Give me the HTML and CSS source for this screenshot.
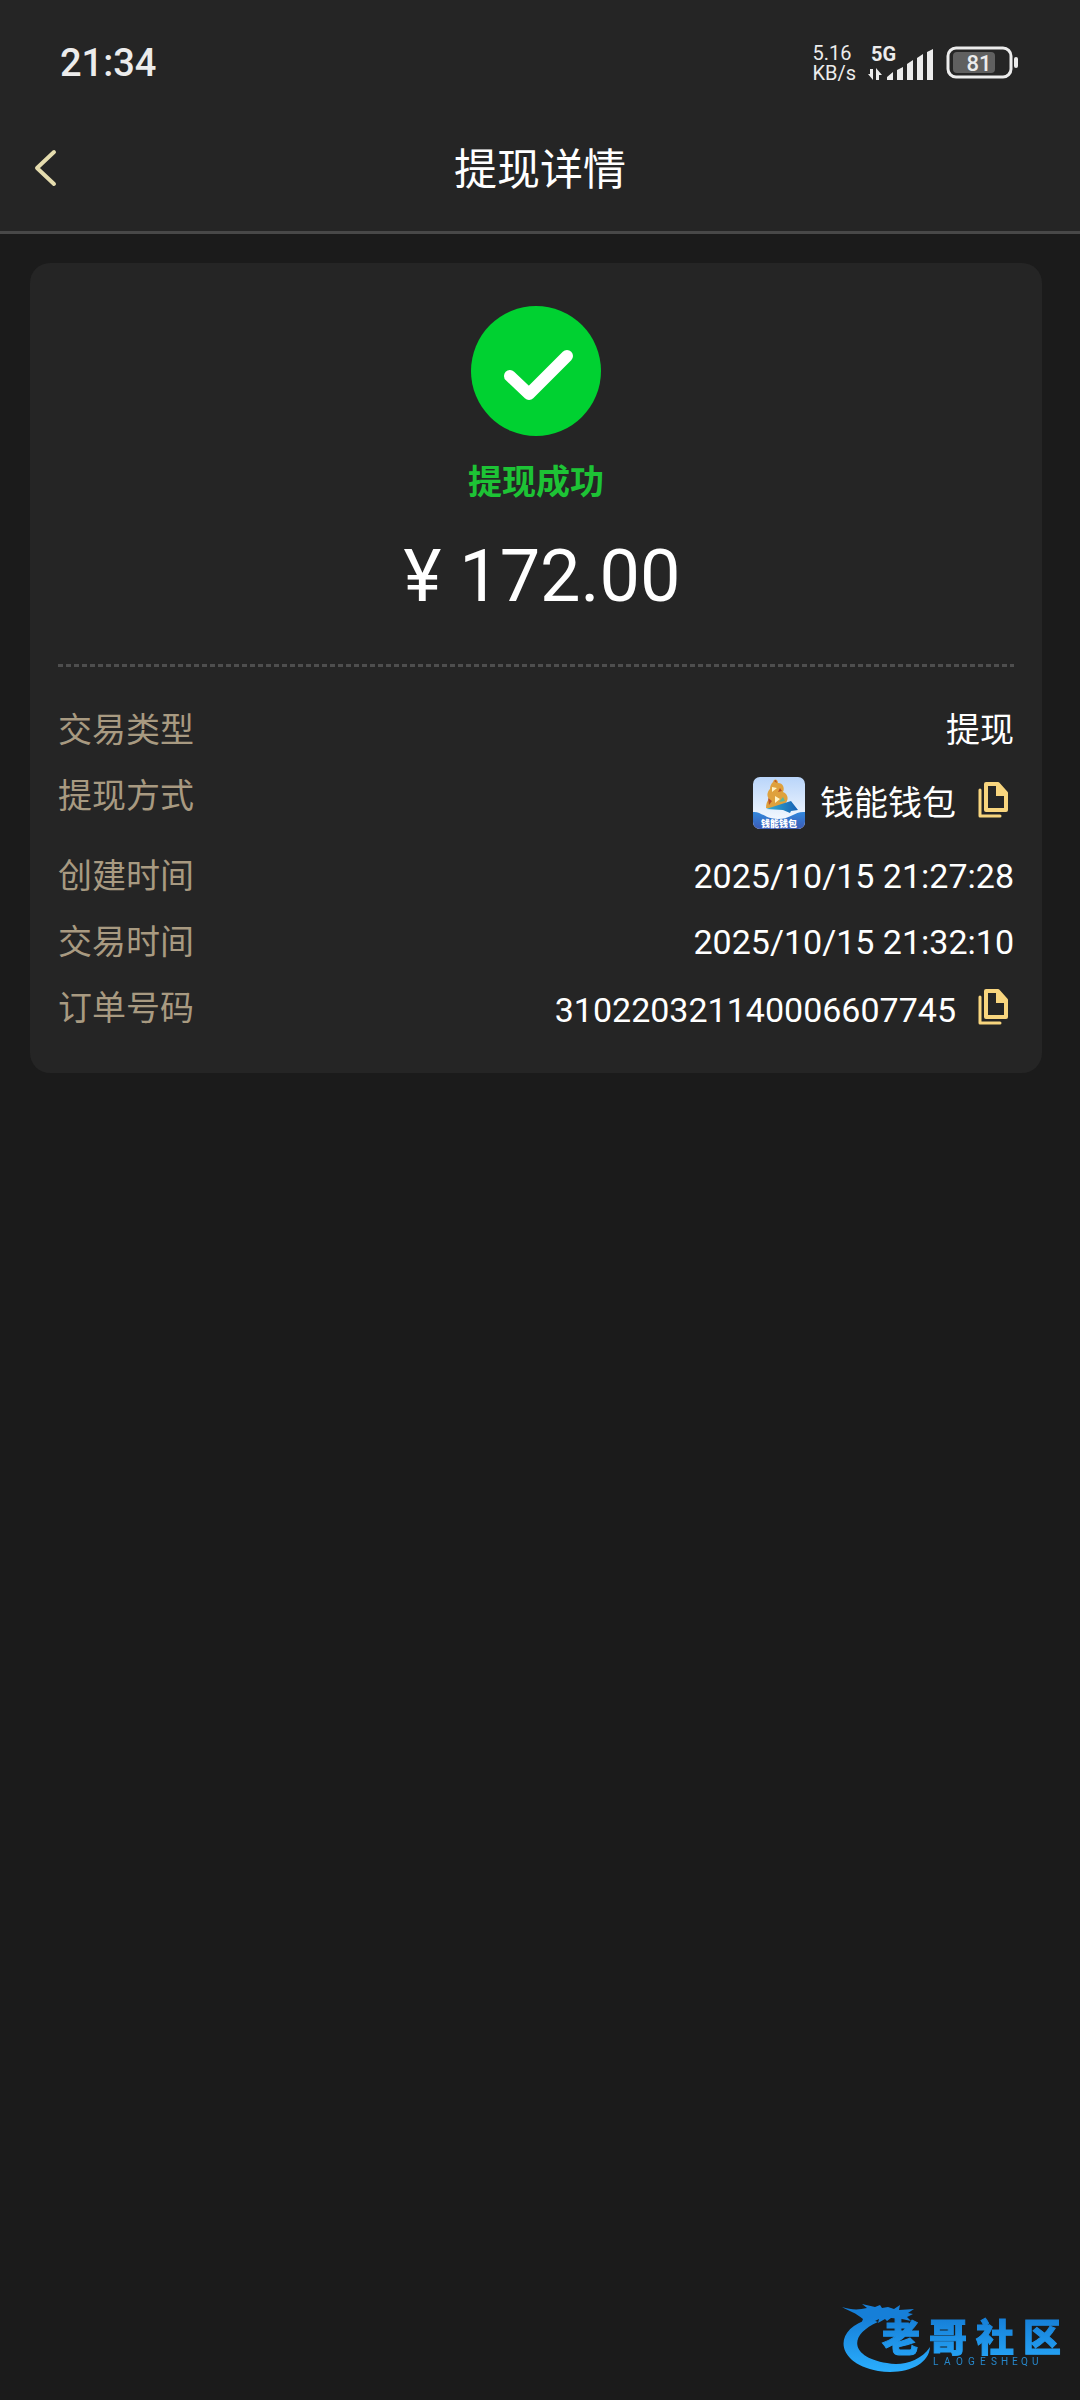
FILE: index.html
```html
<!DOCTYPE html>
<html lang="zh-CN">
<head>
<meta charset="utf-8">
<meta name="viewport" content="width=device-width, initial-scale=1">
<title>提现详情</title>
<link rel="stylesheet" href="styles.css">
</head>
<body>
<svg class="defs" width="0" height="0" aria-hidden="true">
  <symbol id="copy" viewBox="0 0 30 36">
    <path d="M8 2h12l8 9v17H8z" fill="none" stroke="currentColor" stroke-width="4" stroke-linejoin="round"/>
    <path d="M18 2h3l8 9v3H18z" fill="currentColor"/>
    <path d="M2 8v26h20" fill="none" stroke="currentColor" stroke-width="3" stroke-linecap="round" stroke-linejoin="round"/>
  </symbol>
</svg>

<header class="header">
  <div class="status">
    <time class="clock">21:34</time>
    <div class="indicators">
      <div class="speed"><span>5.16</span><span>KB/s</span></div>
      <svg class="signal" viewBox="0 0 66 40" role="img" aria-label="5G">
        <text class="network" x="3" y="18">5G</text>
        <g fill="#ececec">
          <path d="M5 26v11l-5-6h2v-5zM8 37V25l6 7h-3v5z"/>
          <path d="M19 37v-3l6-5v8zM29 27l6-3v13h-6zM39 21l6-4v20h-6zM49 15l6-4v26h-6zM59 9l6-3v31h-6z"/>
        </g>
      </svg>
      <svg class="battery" viewBox="0 0 74 34" role="img" aria-label="81%">
        <rect x="2" y="2" width="63" height="29" rx="8" fill="none" stroke="#ececec" stroke-width="3"/>
        <rect x="7" y="6" width="42" height="21" rx="4" fill="#606060"/>
        <rect x="68" y="11" width="4" height="11" rx="2" fill="#ececec"/>
        <text class="level" x="33" y="25" text-anchor="middle">81</text>
      </svg>
    </div>
  </div>
  <nav class="navbar">
    <button class="back" type="button" aria-label="返回">
      <svg viewBox="0 0 24 38" width="24" height="38"><path d="M20 3 3 19l17 16" fill="none" stroke="#e5dcae" stroke-width="4" stroke-linecap="round" stroke-linejoin="round"/></svg>
    </button>
    <h1 class="title">提现详情</h1>
  </nav>
</header>

<main class="content">
  <section class="card">
    <div class="summary">
      <svg class="check" viewBox="0 0 130 130" aria-hidden="true">
        <circle cx="65" cy="65" r="65" fill="#00d131"/>
        <path d="M39 70 58 88 96 50" fill="none" stroke="#fff" stroke-width="12" stroke-linecap="round" stroke-linejoin="round"/>
      </svg>
      <p class="result">提现成功</p>
      <p class="amount">¥ 172.00</p>
    </div>
    <div class="divider"></div>
    <dl class="details">
      <div class="row"><dt>交易类型</dt><dd>提现</dd></div>
      <div class="row row-wallet">
        <dt>提现方式</dt>
        <dd>
          <svg class="wallet" viewBox="0 0 52 52" aria-hidden="true">
            <defs>
              <linearGradient id="sky" x2="0" y2="1"><stop stop-color="#b9d5fa"/><stop offset="1" stop-color="#fff"/></linearGradient>
              <linearGradient id="sea" x2="0" y2="1"><stop stop-color="#3187dc"/><stop offset="1" stop-color="#3c5bb6"/></linearGradient>
              <linearGradient id="boat"><stop stop-color="#36b0d2"/><stop offset="1" stop-color="#155fb4"/></linearGradient>
              <clipPath id="tile"><rect width="52" height="52" rx="7"/></clipPath>
            </defs>
            <g clip-path="url(#tile)">
              <rect width="52" height="52" fill="url(#sky)"/>
              <path d="M0 35c8-1 12 7 25 7s17-8 27-7v17H0z" fill="url(#sea)"/>
              <path d="M20 5c1-4 5-3 5 1 5 0 7 5 5 9 6 2 6 10 1 12-5 3-12 5-18 4 0-4 1-7 3-9-3-4-1-8 1-10 0-3 1-5 3-7z" fill="#dfa13d"/>
              <path d="m19 10 5 1-5 4zM22 19l5 3-5 4z" fill="#fff3c4"/>
              <path d="m15 21 4 3-3 4zM27 11l2 3-4 1zM21 4l2-1 1 3z" fill="#b84f28"/>
              <path d="m26 25 4-5 2 4z" fill="#5fb59a"/>
              <path d="M13 32 38 24l7 9-7 1-1 2-7-3z" fill="url(#boat)"/>
              <text class="wallet-name" x="26" y="50" text-anchor="middle">钱能钱包</text>
            </g>
          </svg>
          <span>钱能钱包</span>
          <button class="copy" type="button" aria-label="复制提现方式"><svg><use href="#copy"/></svg></button>
        </dd>
      </div>
      <div class="row"><dt>创建时间</dt><dd>2025/10/15 21:27:28</dd></div>
      <div class="row"><dt>交易时间</dt><dd>2025/10/15 21:32:10</dd></div>
      <div class="row row-order">
        <dt>订单号码</dt>
        <dd><span>310220321140006607745</span><button class="copy" type="button" aria-label="复制订单号码"><svg><use href="#copy"/></svg></button></dd>
      </div>
    </dl>
  </section>
</main>

<svg class="watermark" viewBox="0 0 224 72" role="img" aria-label="老哥社区">
  <defs>
    <linearGradient id="blue" gradientUnits="userSpaceOnUse" x1="0" y1="0" x2="0" y2="70"><stop offset=".2" stop-color="#167fd8"/><stop offset="1" stop-color="#2bb0ff"/></linearGradient>
  </defs>
  <path d="M28 15C-9 24-8 59 36 67c28 4 51-6 52-24-10 15-29 19-43 16C8 53 6 31 36 18z" fill="url(#blue)"/>
  <path d="M0 3c9 3 17 3 25 1l-5-4 13 3 5-2 2 3 6-1 6 2 6-4-1 5 15-1-6 4 5 1-6 3 4 4-9-2-11-1-4 3-2-2-7 4 1-4-8 4-6-1-4 2 2-5C14 9 7 7 0 3z" fill="url(#blue)"/>
  <text class="brand" x="40 87 134 181" y="47">老哥社区</text>
  <text class="brand-latin" x="91 102 114 126 138 149 159 170 179 190" y="61">LAOGESHEQU</text>
</svg>
</body>
</html>
```
FILE: styles.css
```css
* { box-sizing: border-box; margin: 0; padding: 0; }

body {
  min-height: 100vh;
  background: #1b1b1b;
  color: #fff;
  font-family: Roboto, "Noto Sans CJK SC", sans-serif;
  font-size: 34px;
  line-height: 50px;
}

button { border: 0; background: none; color: inherit; font: inherit; cursor: pointer; }
.defs { position: absolute; }

.header { background: #252525; border-bottom: 3px solid #484848; }

.status {
  display: flex;
  justify-content: space-between;
  align-items: center;
  height: 104px;
  padding: 22px 60px 0;
}
.clock { font-size: 38px; font-weight: 500; color: #ececec; }
.indicators { display: flex; align-items: center; gap: 12px; color: #ececec; }
.speed { display: flex; flex-direction: column; font-size: 20px; line-height: 20px; }
.signal { width: 66px; height: 40px; }
.battery { width: 74px; height: 34px; }
.network { font-size: 20px; font-weight: 700; fill: #ececec; }
.level { font-size: 22px; font-weight: 500; fill: #ececec; }

.navbar {
  display: grid;
  grid-template-columns: 60px 1fr 60px;
  align-items: center;
  height: 127px;
  padding: 0 16px;
}
.back { height: 60px; display: flex; align-items: center; justify-content: center; }
.title { padding-top: 4px; font-size: 43px; font-weight: 400; line-height: 60px; text-align: center; grid-column: 2; }

.content { padding: 29px 38px 29px 30px; }
.card { padding: 43px 28px 36px; background: #252525; border-radius: 20px; }

.summary { display: flex; flex-direction: column; align-items: center; }
.check { width: 130px; height: 130px; }
.result { margin-top: 21px; font-weight: 700; color: #1dc335; }
.amount { margin-top: 20px; padding-left: 12px; font-size: 72px; line-height: 100px; }

.divider {
  height: 3px;
  margin: 37px 0 38px;
  background: repeating-linear-gradient(90deg, #4e4e4e 0 5px, transparent 5px 8px);
}

.details { display: flex; flex-direction: column; gap: 16px; }
.row { display: flex; justify-content: space-between; align-items: flex-start; }
.row dt { color: #a89a81; }
.row dd { display: flex; align-items: center; }
.row-wallet dd { height: 64px; }
.row-order dd { height: 54px; }
.wallet { width: 52px; height: 52px; margin-right: 15px; }
.wallet-name { font-size: 9px; font-weight: 900; fill: #fff; }
.copy { display: flex; width: 30px; height: 36px; margin: 0 6px 6px 22px; color: #f8d57e; }
.copy svg { width: 30px; height: 36px; }

.watermark { position: fixed; right: 14px; bottom: 24px; width: 224px; height: 72px; }
.brand { font-size: 38px; font-weight: 900; fill: url(#blue); stroke: url(#blue); stroke-width: 1px; }
.brand-latin { font-size: 10px; fill: #2787c9; }
```
